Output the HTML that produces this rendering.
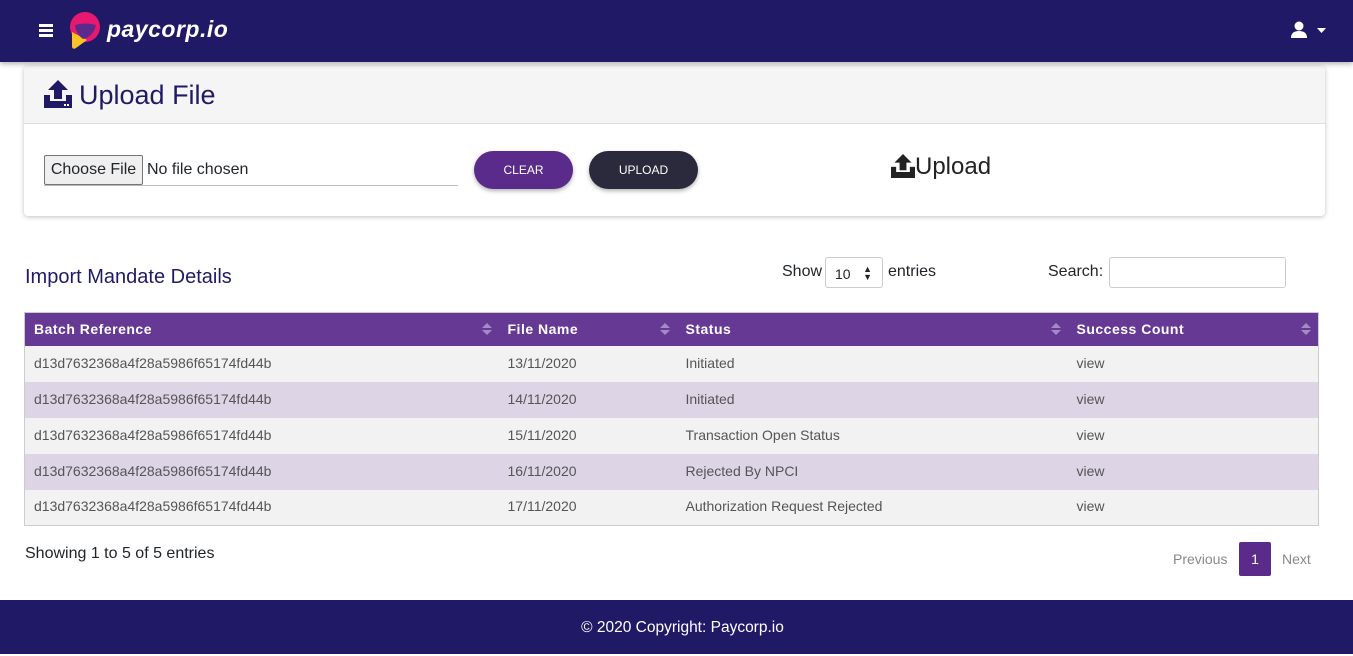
<!DOCTYPE html>
<html><head><meta charset="utf-8"><style>
*{box-sizing:border-box;margin:0;padding:0}
body{width:1353px;height:654px;overflow:hidden;font-family:"Liberation Sans",sans-serif;background:#fff;position:relative;color:#212529}
.nav{position:absolute;left:0;top:0;width:1353px;height:62px;background:#201a66;box-shadow:0 2px 5px rgba(0,0,0,.3);z-index:2}
.card{position:absolute;left:24px;top:66px;width:1301px;height:150px;border-radius:4px;box-shadow:0 1px 5px rgba(0,0,0,.25);background:#fff;overflow:hidden}
.card .hd{height:58px;background:#f5f5f5;border-bottom:1px solid #ddd;position:relative}
.btn{position:absolute;height:38px;border-radius:19px;color:#fff;font-size:12px;display:flex;align-items:center;justify-content:center;box-shadow:0 2px 4px rgba(0,0,0,.3)}
table{position:absolute;left:24px;top:312px;width:1295px;border-collapse:collapse;border:1px solid #ccc;font-size:14px}
th{background:#663995;color:#fff;text-align:left;height:33px;padding-left:9px;font-weight:bold;letter-spacing:.5px;position:relative}
th i{position:absolute;right:12px;top:10px;width:0;height:0}
th i:before{content:"";position:absolute;left:-5px;top:0;border:5px solid transparent;border-bottom:5px solid #a58ac4;border-top:0}
th i:after{content:"";position:absolute;left:-5px;top:7px;border:5px solid transparent;border-top:5px solid #a58ac4;border-bottom:0}
td{height:36px;padding-left:9px;color:#555;padding-bottom:2px}
tr.o td{background:#f2f2f2}tr.e td{background:#ddd4e6}
</style></head><body>
<div class="nav">
 <div style="position:absolute;left:39px;top:24px;width:14px;height:3px;background:#fff;box-shadow:0 5px 0 #fff,0 10px 0 #fff"></div>
 <svg style="position:absolute;left:69px;top:12px" width="32" height="38" viewBox="0 0 32 38"><circle cx="16" cy="15" r="15" fill="#e8176f"/><path d="M3 20 L3 35 Q4 38 7 36 L18 28 Z" fill="#f7c325"/><path d="M6 13 Q16 10 27 13 Q24 25 14 27 Q7 22 6 13Z" fill="#5a2b8a"/></svg>
 <div style="position:absolute;left:107px;top:16px;color:#fff;font-size:23px;font-weight:bold;font-style:italic;letter-spacing:.5px">paycorp.io</div>
 <svg style="position:absolute;left:1291px;top:21px" width="36" height="18" viewBox="0 0 36 18"><circle cx="8" cy="5" r="4.5" fill="#fff"/><path d="M0 17 Q0 10 8 10 Q16 10 16 17Z" fill="#fff"/><path d="M26 7 L35 7 L30.5 12Z" fill="#fff"/></svg>
</div>
<div class="card">
 <div class="hd">
  <svg style="position:absolute;left:20px;top:14px" width="28" height="28" viewBox="0 0 28 28"><path d="M14 0 L24 10 L18 10 L18 19 L10 19 L10 10 L4 10Z" fill="#201a66"/><rect x="0" y="21" width="28" height="7" fill="#201a66"/><rect x="0" y="15" width="6" height="7" fill="#201a66"/><rect x="22" y="15" width="6" height="7" fill="#201a66"/><rect x="20" y="24" width="2" height="2" fill="#fff"/><rect x="23" y="24" width="2" height="2" fill="#fff"/></svg>
  <div style="position:absolute;left:55px;top:14px;font-size:27px;color:#201a66">Upload File</div>
 </div>
 <div style="position:absolute;left:20px;top:89px;width:99px;height:30px;border:1px solid #767676;background:#efefef;font-size:16px;display:flex;align-items:center;justify-content:center;border-radius:2px">Choose File</div>
 <div style="position:absolute;left:123px;top:95px;font-size:16px">No file chosen</div>
 <div style="position:absolute;left:20px;top:119px;width:414px;height:1px;background:#bbb"></div>
 <div class="btn" style="left:450px;top:85px;width:99px;background:#5a2b8a">CLEAR</div>
 <div class="btn" style="left:565px;top:85px;width:109px;background:#2a2a3c">UPLOAD</div>
 <svg style="position:absolute;left:867px;top:88px" width="24" height="24" viewBox="0 0 28 28"><path d="M14 0 L24 10 L18 10 L18 19 L10 19 L10 10 L4 10Z" fill="#222"/><rect x="0" y="21" width="28" height="7" fill="#222"/><rect x="0" y="15" width="6" height="7" fill="#222"/><rect x="22" y="15" width="6" height="7" fill="#222"/></svg>
 <div style="position:absolute;left:891px;top:87px;font-size:24px;color:#222">Upload</div>
</div>
<div style="position:absolute;left:25px;top:266px;font-size:20px;color:#201a66">Import Mandate Details</div>
<div style="position:absolute;left:782px;top:263px;font-size:16px">Show</div>
<div style="position:absolute;left:825px;top:257px;width:58px;height:31px;border:1px solid #ccc;border-radius:3px;font-size:14px;padding:8px 0 0 9px">10 <span style="position:absolute;right:10px;top:7px;font-size:9px;line-height:8px">▲<br>▼</span></div>
<div style="position:absolute;left:888px;top:263px;font-size:16px">entries</div>
<div style="position:absolute;left:1048px;top:263px;font-size:16px">Search:</div>
<div style="position:absolute;left:1109px;top:257px;width:177px;height:31px;border:1px solid #ccc;border-radius:3px"></div>
<table>
<tr><th style="width:474px">Batch Reference<i></i></th><th style="width:178px">File Name<i></i></th><th style="width:391px">Status<i></i></th><th>Success Count<i></i></th></tr>
<tr class="o"><td>d13d7632368a4f28a5986f65174fd44b</td><td>13/11/2020</td><td>Initiated</td><td>view</td></tr>
<tr class="e"><td>d13d7632368a4f28a5986f65174fd44b</td><td>14/11/2020</td><td>Initiated</td><td>view</td></tr>
<tr class="o"><td>d13d7632368a4f28a5986f65174fd44b</td><td>15/11/2020</td><td>Transaction Open Status</td><td>view</td></tr>
<tr class="e"><td>d13d7632368a4f28a5986f65174fd44b</td><td>16/11/2020</td><td>Rejected By NPCI</td><td>view</td></tr>
<tr class="o"><td>d13d7632368a4f28a5986f65174fd44b</td><td>17/11/2020</td><td>Authorization Request Rejected</td><td>view</td></tr>
</table>
<div style="position:absolute;left:25px;top:545px;font-size:16px">Showing 1 to 5 of 5 entries</div>
<div style="position:absolute;left:1173px;top:551px;font-size:14px;color:#888">Previous</div>
<div style="position:absolute;left:1239px;top:542px;width:32px;height:34px;background:#5a2b8a;color:#fff;font-size:14px;display:flex;align-items:center;justify-content:center;border-radius:2px">1</div>
<div style="position:absolute;left:1282px;top:551px;font-size:14px;color:#888">Next</div>
<div style="position:absolute;left:0;top:600px;width:1353px;height:54px;background:#201a66;color:#fff;font-size:15.5px;text-align:center;line-height:56px;padding-left:12px">© 2020 Copyright: Paycorp.io</div>
</body></html>
